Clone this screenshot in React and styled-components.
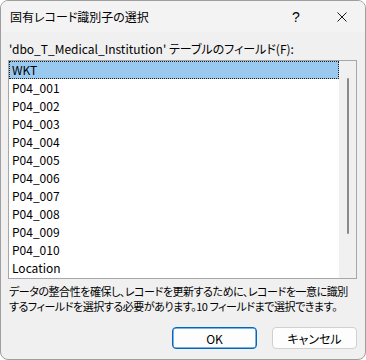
import styled, { createGlobalStyle } from 'styled-components';

const GlobalStyle = createGlobalStyle`
  html, body {
    margin: 0;
    padding: 0;
    background: #ffffff;
  }
  body {
    font-family: "Noto Sans CJK JP", "Noto Sans", sans-serif;
    font-feature-settings: "palt";
    font-size: 12px;
    color: #000;
  }
`;

const Window = styled.div`
  box-sizing: border-box;
  width: 366px;
  height: 360px;
  border: 1px solid #9e9e9e;
  border-radius: 8px;
  background: #f0f0f0;
  display: flex;
  flex-direction: column;
  overflow: hidden;
`;

const TitleBar = styled.div`
  display: flex;
  align-items: center;
  height: 31px;
  flex-shrink: 0;
  background: #f3f3f3;
`;

const Title = styled.div`
  flex: 1;
  padding-left: 9px;
  font-size: 12px;
  line-height: 31px;
`;

const CaptionButton = styled.div`
  width: 46px;
  height: 31px;
  display: flex;
  align-items: center;
  justify-content: center;
  font-family: "Liberation Sans", sans-serif;
  font-size: 14px;
`;

const Body = styled.div`
  flex: 1;
  display: flex;
  flex-direction: column;
  padding: 8px 8px 10px 7px;
`;

const Label = styled.div`
  line-height: 18px;
  padding-left: 1px;
  height: 19px;
  margin-bottom: 1px;
`;

const ListBox = styled.div`
  box-sizing: border-box;
  height: 219px;
  flex-shrink: 0;
  border: 1px solid #a7a7a7;
  background: #ffffff;
  display: flex;
`;

const Rows = styled.div`
  flex: 1;
  display: flex;
  flex-direction: column;
`;

const Row = styled.div`
  box-sizing: border-box;
  height: 18px;
  line-height: 16px;
  padding-left: 2px;
  border: 1px ${p => (p.$selected ? 'dotted #202020' : 'solid transparent')};
  background: ${p => (p.$selected ? '#99c9ef' : 'transparent')};
`;

const ScrollTrack = styled.div`
  width: 17px;
  background: #f0f0f0;
  display: flex;
  justify-content: center;
  padding-top: 17px;
`;

const ScrollThumb = styled.div`
  width: 2px;
  height: 156px;
  border-radius: 1px;
  background: #8a8a8a;
  margin-left: 1px;
`;

const Description = styled.div`
  margin-top: 5px;
  line-height: 15px;
  padding-left: 1px;
  font-size: 11px;
  letter-spacing: -0.45px;
  white-space: nowrap;
`;

const ButtonRow = styled.div`
  margin-top: auto;
  display: flex;
  justify-content: flex-end;
  gap: 15px;
`;

const Button = styled.div`
  box-sizing: border-box;
  width: 85px;
  height: 22px;
  border-radius: 4px;
  display: flex;
  align-items: center;
  justify-content: center;
  background: #fdfdfd;
  border: 1px solid ${p => (p.$primary ? '#0067c0' : '#d0d0d0')};
  box-shadow: ${p => (p.$primary ? 'inset 0 0 0 0.5px #0067c0' : 'none')};
`;

const fields = [
  'WKT',
  'P04_001',
  'P04_002',
  'P04_003',
  'P04_004',
  'P04_005',
  'P04_006',
  'P04_007',
  'P04_008',
  'P04_009',
  'P04_010',
  'Location',
];

const CloseIcon = () => (
  <svg width="10" height="10" viewBox="0 0 10 10">
    <path d="M0.5 0.5 L9.5 9.5 M9.5 0.5 L0.5 9.5" stroke="#1a1a1a" strokeWidth="1" />
  </svg>
);

export default function App() {
  return (
    <>
      <GlobalStyle />
      <Window>
        <TitleBar>
          <Title>固有レコード識別子の選択</Title>
          <CaptionButton>?</CaptionButton>
          <CaptionButton>
            <CloseIcon />
          </CaptionButton>
        </TitleBar>
        <Body>
          <Label>'dbo_T_Medical_Institution' テーブルのフィールド(F):</Label>
          <ListBox>
            <Rows>
              {fields.map((f, i) => (
                <Row key={f} $selected={i === 0}>
                  {f}
                </Row>
              ))}
            </Rows>
            <ScrollTrack>
              <ScrollThumb />
            </ScrollTrack>
          </ListBox>
          <Description>
            データの整合性を確保し、レコードを更新するために、レコードを一意に識別
            <br />
            するフィールドを選択する必要があります。10 フィールドまで選択できます。
          </Description>
          <ButtonRow>
            <Button $primary>OK</Button>
            <Button>キャンセル</Button>
          </ButtonRow>
        </Body>
      </Window>
    </>
  );
}
